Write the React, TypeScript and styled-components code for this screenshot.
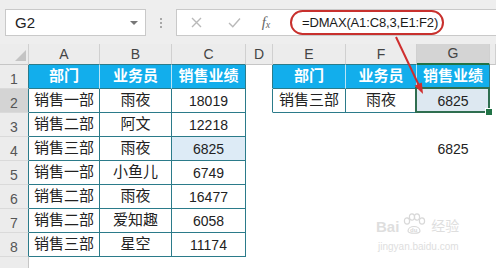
import React from "react";
import styled, { createGlobalStyle, css } from "styled-components";

const TEAL = "#2b7b8a";
const PALE = "#b9e4f6";
const GREEN = "#217346";

const GlobalStyle = createGlobalStyle`
  html, body {
    margin: 0;
    padding: 0;
    background: #fff;
  }
  body {
    width: 496px;
    height: 268px;
    overflow: hidden;
    font-family: "Liberation Sans", "Noto Sans CJK SC", sans-serif;
  }
`;

const Window = styled.div`
  position: relative;
  width: 496px;
  height: 268px;
  overflow: hidden;
  background: #fff;
`;

/* ---------- formula bar ---------- */

const FormulaBar = styled.div`
  display: flex;
  align-items: flex-start;
  height: 44px;
  box-sizing: border-box;
  padding: 9px 0 0 5px;
  background: #eeeeee;
`;

const NameBox = styled.div`
  display: flex;
  align-items: center;
  justify-content: space-between;
  width: 141px;
  height: 27px;
  box-sizing: border-box;
  padding: 0 7px 0 9px;
  background: #fff;
  border: 1px solid #c9c9c9;
  font-size: 15px;
  color: #222;
`;

const Caret = styled.span`
  width: 0;
  height: 0;
  border-left: 4px solid transparent;
  border-right: 4px solid transparent;
  border-top: 4px solid #777;
`;

const Grip = styled.div`
  display: flex;
  flex-direction: column;
  align-items: center;
  justify-content: center;
  gap: 2px;
  width: 30px;
  height: 27px;

  > span {
    width: 2px;
    height: 2px;
    background: #a8a8a8;
  }
`;

const FormulaBox = styled.div`
  display: flex;
  align-items: center;
  flex: 1;
  height: 27px;
  box-sizing: border-box;
  background: #fff;
  border: 1px solid #c9c9c9;
  border-right: none;
`;

const ToolSlot = styled.div<{ $w: number }>`
  display: flex;
  align-items: center;
  justify-content: center;
  width: ${(p) => p.$w}px;
  height: 100%;
  flex-shrink: 0;
`;

const Fx = styled.span`
  font-family: "Liberation Serif", serif;
  font-style: italic;
  font-size: 15px;
  color: #666;

  sub {
    font-size: 10px;
    vertical-align: -1px;
  }
`;

const FormulaInput = styled.div`
  position: relative;
  display: flex;
  align-items: center;
  flex: 1;
  height: 100%;
  padding-left: 23px;
  font-size: 13px;
  letter-spacing: -0.15px;
  color: #1a1a1a;
`;

const Callout = styled.span`
  position: absolute;
  left: 11px;
  top: 0;
  width: 154px;
  height: 25px;
  box-sizing: border-box;
  border: 2px solid #c8302d;
  border-radius: 13px;
`;

/* ---------- sheet ---------- */

const Sheet = styled.div`
  display: grid;
  grid-template-columns: 29px 71px 72px 74px 27px 73px 71px 73px 6px;
  grid-template-rows: 21px;
  grid-auto-rows: 24px;
`;

type EdgeProps = { $right: string; $bottom: string };

const cellBase = css<EdgeProps>`
  box-sizing: border-box;
  display: flex;
  align-items: flex-end;
  justify-content: center;
  min-width: 0;
  white-space: nowrap;
  border-right: 1px solid ${(p) => p.$right};
  border-bottom: 1px solid ${(p) => p.$bottom};
`;

const Corner = styled.div<EdgeProps>`
  ${cellBase};
  justify-content: flex-end;
  padding: 0 2px 3px 0;
  background: #ececec;

  > span {
    width: 0;
    height: 0;
    border-left: 11px solid transparent;
    border-bottom: 11px solid #c4c4c4;
  }
`;

const ColHeader = styled.div<EdgeProps & { $active?: boolean }>`
  ${cellBase};
  padding-bottom: 2px;
  background: ${(p) => (p.$active ? "#d4d4d4" : "#ececec")};
  font-size: 14px;
  color: #444;
  ${(p) =>
    p.$active &&
    css`
      border-bottom: 2px solid ${GREEN};
    `}
`;

const RowHeader = styled.div<EdgeProps & { $active?: boolean }>`
  ${cellBase};
  padding-bottom: 1px;
  background: ${(p) => (p.$active ? "#d4d4d4" : "#ececec")};
  font-size: 14px;
  color: #555;
`;

const HeadCell = styled.div<EdgeProps>`
  ${cellBase};
  padding-bottom: 3px;
  background: #12aeec;
  color: #fff;
  font-weight: bold;
  font-size: 15px;
`;

const DataCell = styled.div<
  EdgeProps & { $fill?: string; $num?: boolean; $selected?: boolean }
>`
  ${cellBase};
  position: relative;
  padding-bottom: 3px;
  background: ${(p) => p.$fill || "#fff"};
  font-size: ${(p) => (p.$num ? 14 : 15)}px;
  color: #222;

  ${(p) =>
    p.$selected &&
    css`
      z-index: 1;
      &::after {
        content: "";
        position: absolute;
        left: -2px;
        top: -2px;
        right: -1px;
        bottom: -1px;
        border: 2px solid #2f6e50;
      }
    `}
`;

const FillHandle = styled.span`
  position: absolute;
  right: -4px;
  bottom: -4px;
  z-index: 2;
  width: 6px;
  height: 6px;
  background: ${GREEN};
  border: 1px solid #fff;
`;

/* ---------- overlays ---------- */

const ArrowLayer = styled.svg`
  position: absolute;
  left: 0;
  top: 0;
  pointer-events: none;
  z-index: 3;
`;

const Watermark = styled.div`
  position: absolute;
  left: 376px;
  top: 213px;
  display: flex;
  flex-direction: column;
  align-items: flex-start;
  gap: 6px;
  color: #dedede;
  pointer-events: none;
`;

const MarkLine = styled.div`
  display: flex;
  align-items: flex-end;
  gap: 2px;
  font-size: 15px;
  font-weight: bold;

  > em {
    font-style: normal;
    font-size: 14px;
    font-weight: normal;
    margin-left: 2px;
  }
`;

const MarkUrl = styled.div`
  font-size: 10px;
  padding-left: 2px;
`;

/* ---------- data ---------- */

const columns = ["A", "B", "C", "D", "E", "F", "G"];

const leftTable = [
  ["部门", "业务员", "销售业绩"],
  ["销售一部", "雨夜", "18019"],
  ["销售二部", "阿文", "12218"],
  ["销售三部", "雨夜", "6825"],
  ["销售一部", "小鱼儿", "6749"],
  ["销售二部", "雨夜", "16477"],
  ["销售二部", "爱知趣", "6058"],
  ["销售三部", "星空", "11174"],
];

const rightTable = [
  ["部门", "业务员", "销售业绩"],
  ["销售三部", "雨夜", "6825"],
];

// row 9 is only a sliver at the bottom edge, so its number is not shown
const ROWS = 9;
const COLS = 8;

const inTable = (r: number, c: number) =>
  (r >= 1 && r <= 8 && c >= 1 && c <= 3) ||
  (r >= 1 && r <= 2 && c >= 5 && c <= 7);

const rightEdge = (r: number, c: number) => {
  const a = inTable(r, c);
  const b = inTable(r, c + 1);
  if (a && b && r === 1) return PALE;
  if (a || b) return TEAL;
  if (r === 0) return "#d0d0d0";
  if (c === 0) return "#c6c6c6";
  return "transparent";
};

const bottomEdge = (r: number, c: number) => {
  if (inTable(r, c) || inTable(r + 1, c)) return TEAL;
  if (r === 0) return "#c6c6c6";
  if (c === 0) return "#dadada";
  return "transparent";
};

const valueAt = (r: number, c: number) => {
  if (c >= 1 && c <= 3 && r >= 1 && r <= 8) return leftTable[r - 1][c - 1];
  if (c >= 5 && c <= 7 && r >= 1 && r <= 2) return rightTable[r - 1][c - 5];
  if (r === 4 && c === 7) return "6825";
  return "";
};

const ACTIVE = { r: 2, c: 7 };

const renderCell = (r: number, c: number) => {
  const edges = { $right: rightEdge(r, c), $bottom: bottomEdge(r, c) };
  const key = `${r}-${c}`;

  if (r === 0 && c === 0)
    return (
      <Corner key={key} {...edges}>
        <span />
      </Corner>
    );
  if (r === 0)
    return (
      <ColHeader key={key} {...edges} $active={c === ACTIVE.c}>
        {columns[c - 1] || ""}
      </ColHeader>
    );
  if (c === 0)
    return (
      <RowHeader key={key} {...edges} $active={r === ACTIVE.r}>
        {r < ROWS ? r : ""}
      </RowHeader>
    );

  const value = valueAt(r, c);
  if (r === 1 && inTable(r, c))
    return (
      <HeadCell key={key} {...edges}>
        {value}
      </HeadCell>
    );

  const selected = r === ACTIVE.r && c === ACTIVE.c;
  let fill: string | undefined;
  if (selected) fill = "#dde8f1";
  if (r === 4 && c === 3) fill = "#ddebf6";

  return (
    <DataCell
      key={key}
      {...edges}
      $fill={fill}
      $num={/^\d+$/.test(value)}
      $selected={selected}
    >
      {value}
      {selected && <FillHandle />}
    </DataCell>
  );
};

const CancelIcon = () => (
  <svg width="11" height="11" viewBox="0 0 11 11">
    <path d="M1 1 L10 10 M10 1 L1 10" stroke="#b9b9b9" strokeWidth="1.4" />
  </svg>
);

const EnterIcon = () => (
  <svg width="13" height="11" viewBox="0 0 13 11">
    <path
      d="M1 6 L4.8 9.8 L12 1.5"
      fill="none"
      stroke="#b9b9b9"
      strokeWidth="1.4"
    />
  </svg>
);

const PawIcon = () => (
  <svg width="26" height="22" viewBox="0 0 26 22">
    <g fill="none" stroke="#d8d8d8" strokeWidth="1.2">
      <ellipse cx="6" cy="8" rx="2.6" ry="3.2" />
      <ellipse cx="11" cy="4" rx="2.6" ry="3.2" />
      <ellipse cx="16" cy="4" rx="2.6" ry="3.2" />
      <ellipse cx="21" cy="8" rx="2.6" ry="3.2" />
      <path d="M7 18 C7 12 19 12 19 18 C19 21 7 21 7 18 Z" />
    </g>
    <text x="9" y="19" fontSize="6" fill="#d8d8d8" fontFamily="Liberation Sans">
      du
    </text>
  </svg>
);

export default function App() {
  const cells: React.ReactNode[] = [];
  for (let r = 0; r <= ROWS; r++) {
    for (let c = 0; c <= COLS; c++) cells.push(renderCell(r, c));
  }

  return (
    <Window>
      <GlobalStyle />
      <FormulaBar>
        <NameBox>
          G2
          <Caret />
        </NameBox>
        <Grip>
          <span />
          <span />
          <span />
        </Grip>
        <FormulaBox>
          <ToolSlot $w={38}>
            <CancelIcon />
          </ToolSlot>
          <ToolSlot $w={38}>
            <EnterIcon />
          </ToolSlot>
          <ToolSlot $w={26}>
            <Fx>
              f<sub>x</sub>
            </Fx>
          </ToolSlot>
          <FormulaInput>
            =DMAX(A1:C8,3,E1:F2)
            <Callout />
          </FormulaInput>
        </FormulaBox>
      </FormulaBar>

      <Sheet>{cells}</Sheet>

      <ArrowLayer width="496" height="268" viewBox="0 0 496 268">
        <line
          x1="396"
          y1="37"
          x2="418.5"
          y2="84.5"
          stroke="#cf2e2e"
          strokeWidth="2"
        />
        <polygon points="423,94 414.6,85.8 421.8,82.4" fill="#cf2e2e" />
      </ArrowLayer>

      <Watermark>
        <MarkLine>
          Bai
          <PawIcon />
          <em>经验</em>
        </MarkLine>
        <MarkUrl>jingyan.baidu.com</MarkUrl>
      </Watermark>
    </Window>
  );
}
